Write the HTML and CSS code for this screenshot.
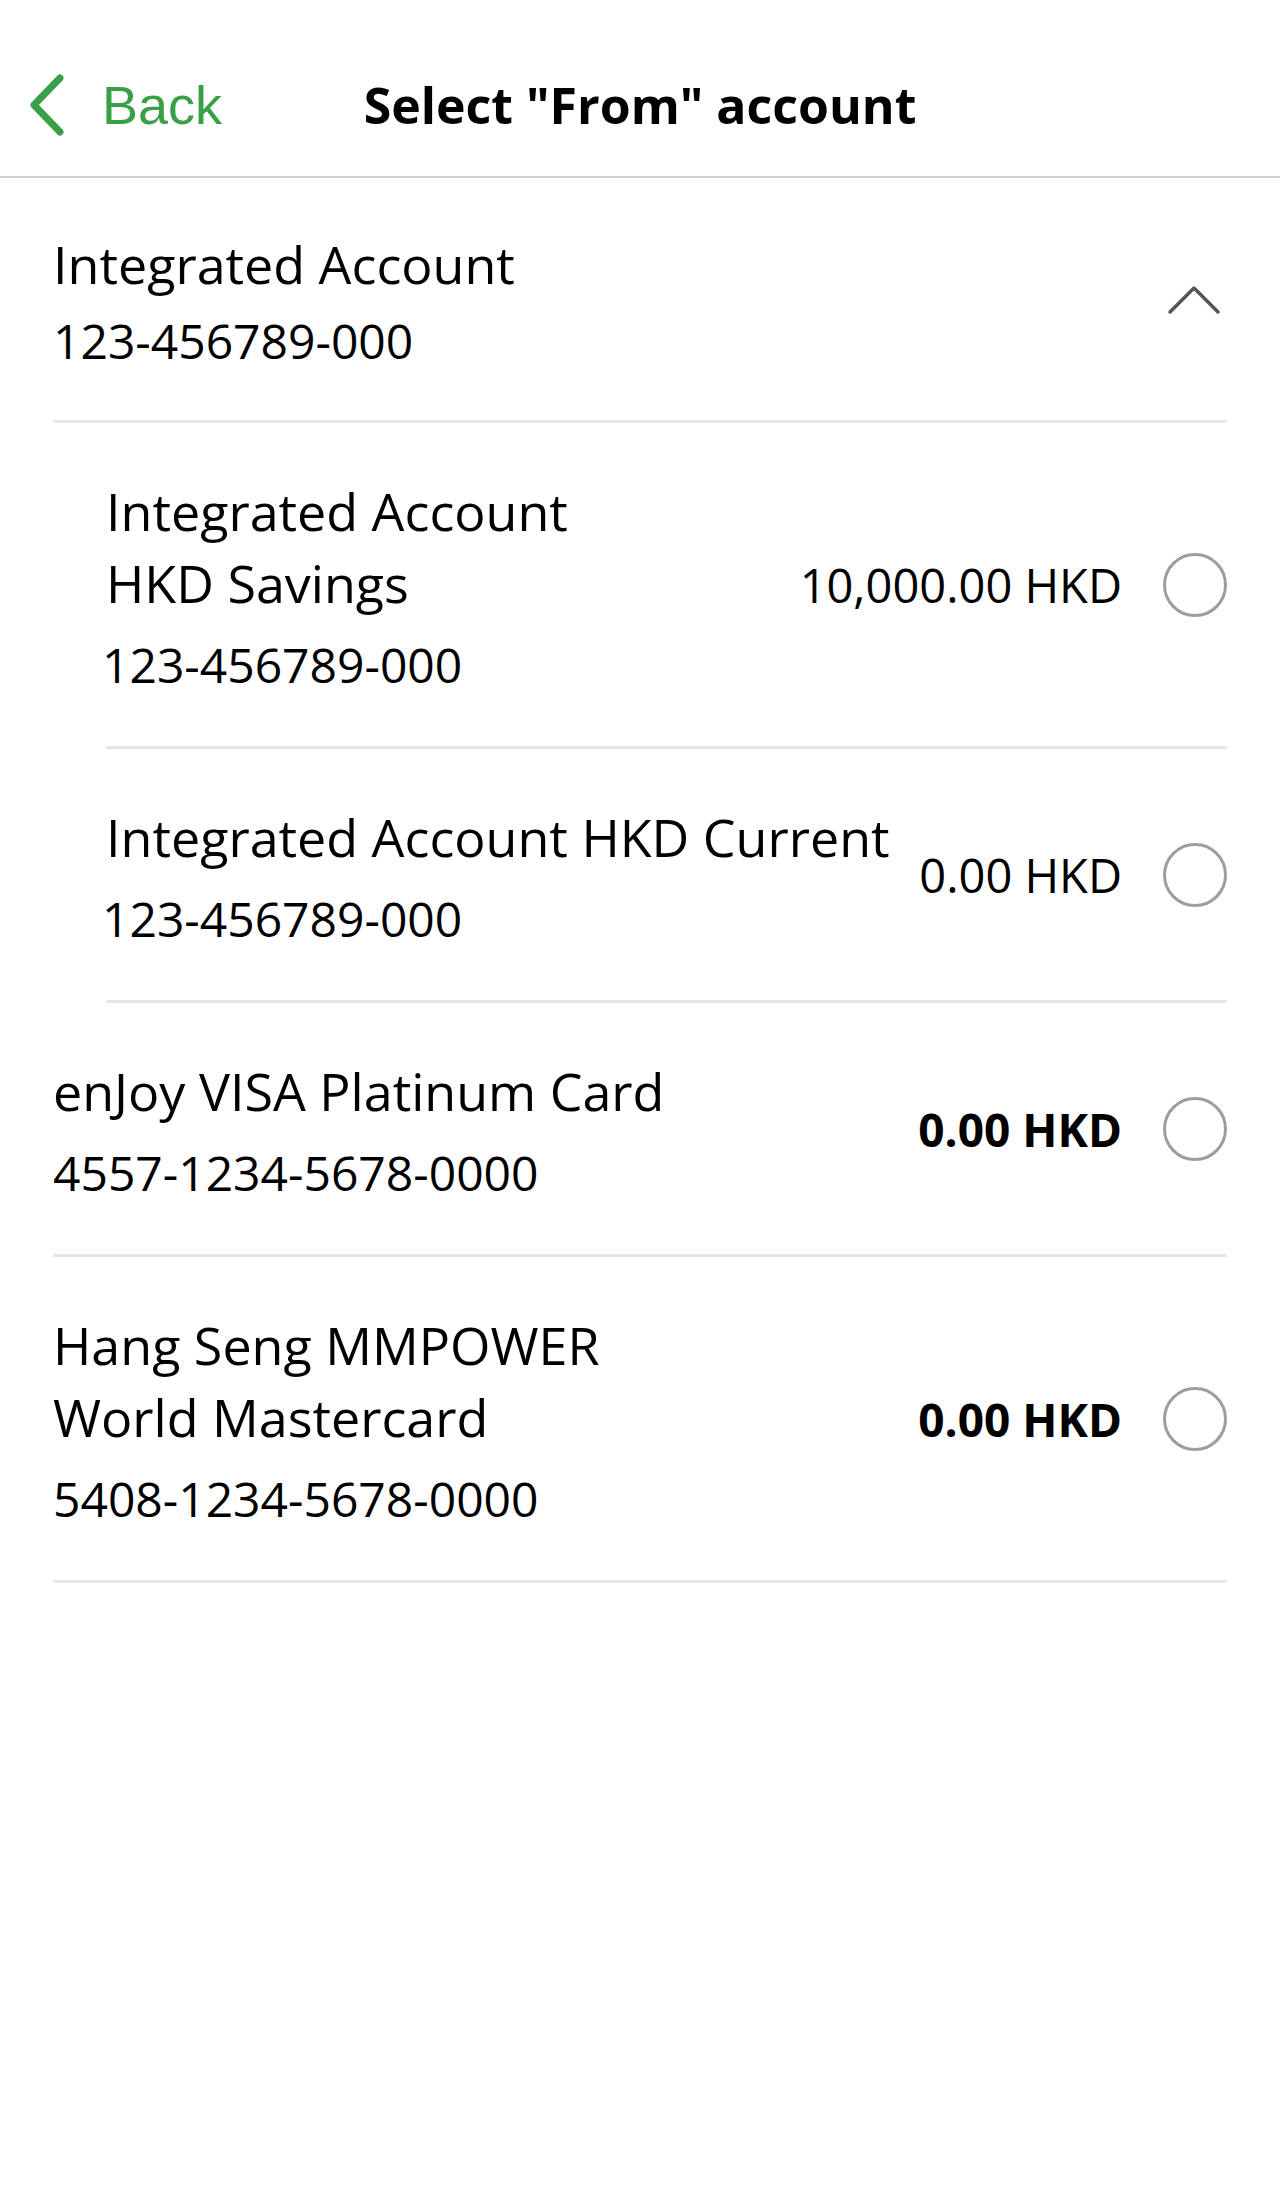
FILE: index.html
```html
<!DOCTYPE html>
<html lang="en">
<head>
    <meta charset="UTF-8">
    <meta name="viewport" content="width=device-width, initial-scale=1.0">
    <title>Select "From" account</title>
    <link rel="stylesheet" href="styles.css">
</head>
<body>
    <div class="top-bar">
        <a class="back" href="#">
            <svg class="back-icon" width="40" height="62" viewBox="0 0 40 62">
                <polyline points="32,4 6,31 32,58" fill="none" stroke="currentColor" stroke-width="7" stroke-linecap="round" stroke-linejoin="round"/>
            </svg>
            <span>Back</span>
        </a>
        <h1 class="page-title">Select "From" account</h1>
        <div></div>
    </div>

    <div class="list">
        <div class="row group-head">
            <div class="info">
                <div class="name">Integrated Account</div>
                <div class="acct-no">123-456789-000</div>
            </div>
            <svg class="toggle" width="54" height="30" viewBox="0 0 54 30">
                <polyline points="3,27 27,3 51,27" fill="none" stroke="#555" stroke-width="3.5" stroke-linecap="round" stroke-linejoin="round"/>
            </svg>
        </div>

        <div class="row sub">
            <div class="info">
                <div class="name">Integrated Account<br>HKD Savings</div>
                <div class="acct-no">123-456789-000</div>
            </div>
            <div class="amount">10,000.00 HKD</div>
            <span class="radio"></span>
        </div>

        <div class="row sub">
            <div class="info">
                <div class="name">Integrated Account HKD Current</div>
                <div class="acct-no">123-456789-000</div>
            </div>
            <div class="amount">0.00 HKD</div>
            <span class="radio"></span>
        </div>

        <div class="row">
            <div class="info">
                <div class="name">enJoy VISA Platinum Card</div>
                <div class="acct-no">4557-1234-5678-0000</div>
            </div>
            <div class="amount bold">0.00 HKD</div>
            <span class="radio"></span>
        </div>

        <div class="row">
            <div class="info">
                <div class="name">Hang Seng MMPOWER<br>World Mastercard</div>
                <div class="acct-no">5408-1234-5678-0000</div>
            </div>
            <div class="amount bold">0.00 HKD</div>
            <span class="radio"></span>
        </div>
    </div>
</body>
</html>
```

FILE: styles.css
```css
/* 选择账户页面 */
:root {
    --green: #3aa047;
    --text: #000;
    --line: #e6e6e6;
    --radio: #9d9d9d;
}
body {
    margin: 0;
    padding: 0;
    background: #fff;
    color: var(--text);
    font-family: "Open Sans", "Noto Sans", sans-serif;
}
.top-bar {
    display: grid;
    grid-template-columns: 1fr auto 1fr;
    align-items: center;
    height: 142px;
    padding-top: 34px;
    border-bottom: 2px solid #d0d0d0;
}
.back {
    display: flex;
    align-items: center;
    padding-left: 28px;
    color: var(--green);
    text-decoration: none;
    font-family: "Liberation Sans", Arial, sans-serif;
    font-size: 54px;
}
.back-icon {
    display: block;
    margin-right: 34px;
}
.page-title {
    margin: 0;
    font-size: 50px;
    font-weight: 700;
    line-height: 66px;
    white-space: nowrap;
}
.list {
    padding: 0 53px;
}
.row {
    display: flex;
    align-items: center;
    padding: 52px 0 51px;
    border-bottom: 3px solid var(--line);
}
.row.group-head {
    padding: 50px 0 49px;
}
.row.sub {
    margin-left: 53px;
}
.info {
    flex: 1;
}
.name {
    font-size: 52px;
    line-height: 72px;
}
.acct-no {
    font-size: 48px;
    line-height: 60px;
    margin-top: 16px;
}
.group-head .acct-no {
    margin-top: 11px;
}
.sub .acct-no {
    margin-left: -4px;
}
.amount {
    font-size: 47px;
    line-height: 60px;
    white-space: nowrap;
}
.amount.bold {
    font-size: 46px;
    font-weight: 700;
}
.radio {
    width: 64px;
    height: 64px;
    box-sizing: border-box;
    border: 3px solid var(--radio);
    border-radius: 50%;
    margin-left: 41px;
    flex-shrink: 0;
}
.toggle {
    display: block;
    margin-right: 6px;
}
```
